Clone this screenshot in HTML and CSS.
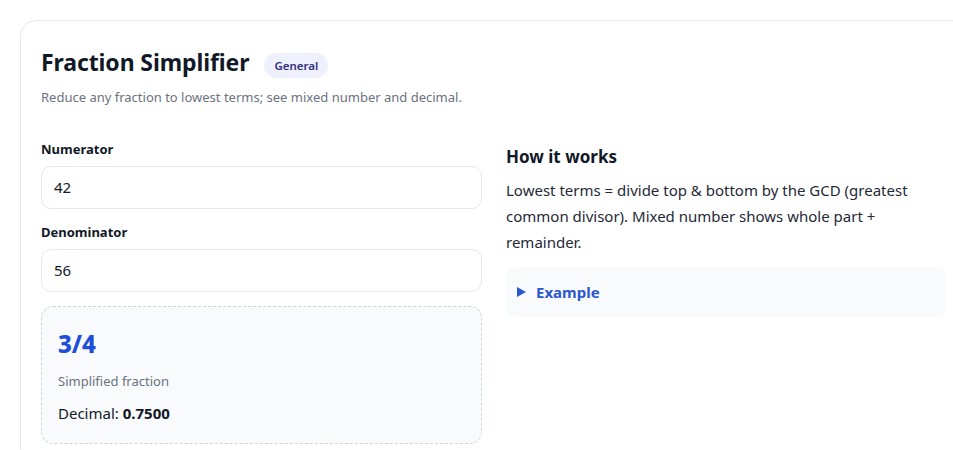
FILE: index.html
```html
<!DOCTYPE html>
<html>
<head>
<meta charset="utf-8">
<link rel="stylesheet" href="styles.css">
</head>
<body>
<div class="card">
  <div class="head">
    <h1 class="title">Fraction Simplifier</h1>
    <span class="badge">General</span>
  </div>
  <p class="sub">Reduce any fraction to lowest terms; see mixed number and decimal.</p>
  <div class="grid">
    <div class="left">
      <label class="lbl">Numerator</label>
      <div class="input">42</div>
      <label class="lbl">Denominator</label>
      <div class="input">56</div>
      <div class="result">
        <div class="big">3/4</div>
        <div class="muted">Simplified fraction</div>
        <div class="dec">Decimal: <b>0.7500</b></div>
      </div>
    </div>
    <div class="right">
      <h2 class="how">How it works</h2>
      <p class="para">Lowest terms = divide top &amp; bottom by the GCD (greatest common divisor). Mixed number shows whole part + remainder.</p>
      <div class="example"><svg class="tri" width="9" height="10" viewBox="0 0 9 10"><path d="M0 0 L9 5 L0 10 Z" fill="#2a58cf"/></svg>Example</div>
    </div>
  </div>
</div>
</body>
</html>
```
FILE: styles.css
```css
html, body { margin: 0; padding: 0; overflow: hidden; }
body {
  background: #fff;
  font-family: "Noto Sans", "Open Sans", sans-serif;
  color: #111827;
  width: 953px;
  height: 450px;
}
.card {
  margin: 20px 0 0 20px;
  width: 905px;
  padding: 25px 20px 20px 20px;
  border: 1px solid #e5e7eb;
  border-radius: 16px;
  background: #fff;
}
.head { display: flex; align-items: center; gap: 15px; }
.title { margin: 0; font-size: 23px; font-weight: 700; line-height: 32px; color: #111827; letter-spacing: -0.1px; }
.badge {
  background: #eef0fd; color: #312e81; font-size: 11.5px; font-weight: 600;
  padding: 4px 10px; border-radius: 999px; line-height: 17px; margin-top: 7px;
}
.sub { margin: 10px 0 0; font-size: 13px; color: #6b7280; line-height: 18px; }
.grid { display: grid; grid-template-columns: 441px 441px; column-gap: 24px; margin-top: 34px; }
.lbl { display: block; font-size: 13px; font-weight: 700; line-height: 18px; margin-top: 0; color: #111827; }
.input {
  margin: 8px 0 14px; height: 41px; border: 1px solid #e5e7eb; border-radius: 10px;
  box-sizing: content-box; padding: 0 12px; font-size: 15px; line-height: 41px; color: #111827;
}
.result {
  margin-top: 6px; border: 1px dashed #d1d5db; border-radius: 12px; background: #f8fafc;
  padding: 20px 16px 19px;
}
.big { font-size: 24px; font-weight: 800; color: #1d4ed8; line-height: 34px; }
.muted { font-size: 13px; color: #6b7280; margin-top: 10px; line-height: 20px; }
.dec { font-size: 15px; margin-top: 11px; line-height: 22px; }
.dec b { font-weight: 700; }
.right { padding-top: 5px; }
.how { margin: 0; font-size: 17px; font-weight: 700; line-height: 24px; }
.para { margin: 8px 0 0; font-size: 15px; line-height: 26px; color: #1f2937; }
.example {
  margin-top: 12px; background: #f8fafc; border-radius: 10px; height: 50px;
  padding: 0 11px; display: flex; align-items: center; font-size: 15px; font-weight: 700; color: #2a58cf;
}
.tri { margin-right: 10px; }
```
